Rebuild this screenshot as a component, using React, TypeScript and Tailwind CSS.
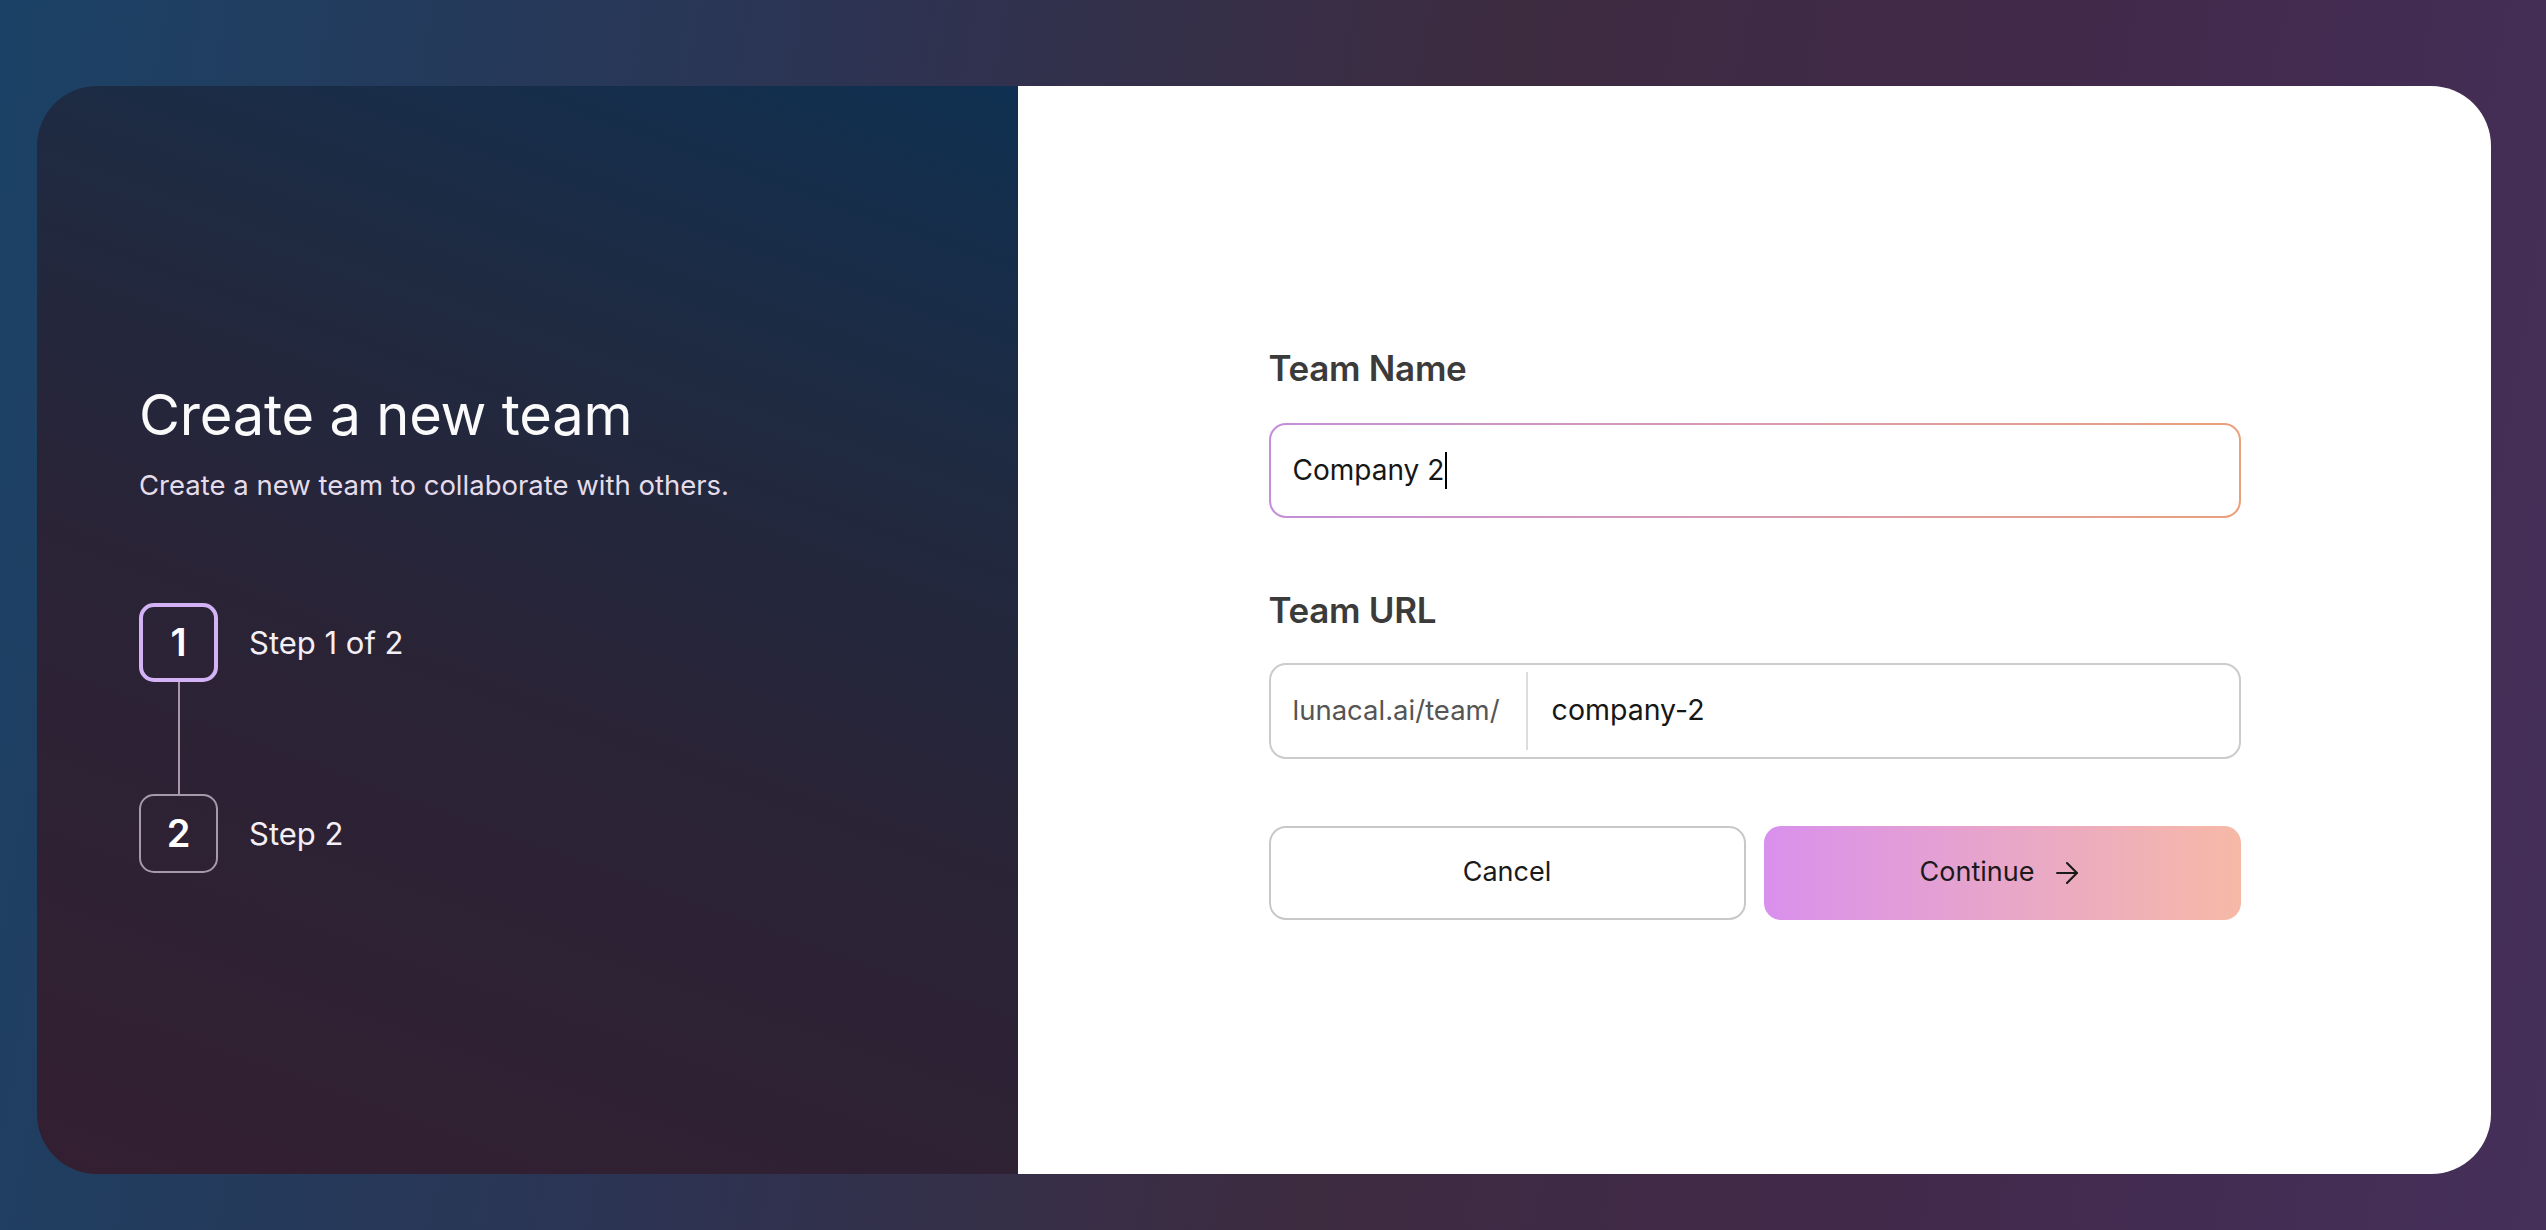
import { ArrowRight } from "lucide-react";

function StepBox({ n, active }: { n: number; active?: boolean }) {
  return (
    <div
      className={
        active
          ? "w-[79px] h-[79px] rounded-[15px] border-[4px] border-[#d3b2f6] flex items-center justify-center text-[38px] font-semibold text-white"
          : "w-[79px] h-[79px] rounded-[15px] border-[2px] border-[#a898ab] flex items-center justify-center text-[38px] font-semibold text-white"
      }
    >
      {n}
    </div>
  );
}

export default function App() {
  return (
    <div className="w-full h-[1230px] flex pt-[86px] pb-[56px] pl-[37px] pr-[55px] bg-[linear-gradient(100deg,#1b4266_0%,#2c3453_30%,#3d2b40_55%,#41294a_75%,#45305a_100%)] font-['Inter',sans-serif]">
      <div className="flex-1 flex rounded-[60px] overflow-hidden">
        {/* left side */}
        <div className="w-[981px] flex flex-col justify-center pl-[102px] pb-[5px] bg-[linear-gradient(200deg,#0f3051_0%,#1f2a41_28%,#2a2336_55%,#331f31_100%)]">
          <h1 className="text-[56px] leading-[1.2] font-normal text-[#fafafa] tracking-[-0.2px]">Create a new team</h1>
          <p className="mt-[23px] text-[27.5px] leading-none text-[#e4dcea]">Create a new team to collaborate with others.</p>

          <div className="mt-[104px] flex flex-col">
            <div className="flex items-center gap-[31px]">
              <StepBox n={1} active />
              <span className="text-[31px] text-[#f4eff4]">Step 1 of 2</span>
            </div>
            <div className="ml-[39px] w-[2px] h-[112px] bg-[#a797a9]" />
            <div className="flex items-center gap-[31px]">
              <StepBox n={2} />
              <span className="text-[31px] text-[#f4eff4]">Step 2</span>
            </div>
          </div>
        </div>

        {/* right side */}
        <div className="flex-1 bg-white flex items-center justify-center">
          <div className="w-[972px] flex flex-col pt-[10px]">
            <label className="text-[35px] leading-none font-semibold text-[#3b3b3b] tracking-[-0.3px]">Team Name</label>
            <div className="mt-[37px] p-[2px] rounded-[17px] bg-[linear-gradient(90deg,#c48ed8,#d79bb0_50%,#eaa07c)]">
              <div className="h-[91px] rounded-[15px] bg-white flex items-center px-[22px] text-[28px] text-[#161616]">
                Company 2<span className="ml-[1px] w-[2px] h-[37px] bg-black" />
              </div>
            </div>

            <label className="mt-[75px] text-[35px] leading-none font-semibold text-[#3b3b3b] tracking-[-0.3px]">Team URL</label>
            <div className="mt-[35px] h-[96px] rounded-[17px] border-[2px] border-[#cbcbcb] flex items-stretch">
              <div className="flex items-center pl-[22px] pr-[26px] text-[27.5px] text-[#555555]">lunacal.ai/team/</div>
              <div className="my-[7px] w-[2px] bg-[#dcdcdc]" />
              <div className="flex items-center pl-[24px] text-[28.5px] text-[#161616]">company-2</div>
            </div>

            <div className="mt-[67px] grid grid-cols-2 gap-[18px]">
              <button className="h-[94px] rounded-[17px] border-[2px] border-[#c8c8c8] bg-white text-[27px] text-[#1a1a1a]">
                Cancel
              </button>
              <button className="h-[94px] rounded-[17px] bg-[linear-gradient(90deg,#d990ed,#e9a8c6_55%,#f6b9a6)] text-[27px] text-[#1a1a1a] flex items-center justify-center gap-[16px]">
                Continue
                <ArrowRight size={34} strokeWidth={1.5} />
              </button>
            </div>
          </div>
        </div>
      </div>
    </div>
  );
}
